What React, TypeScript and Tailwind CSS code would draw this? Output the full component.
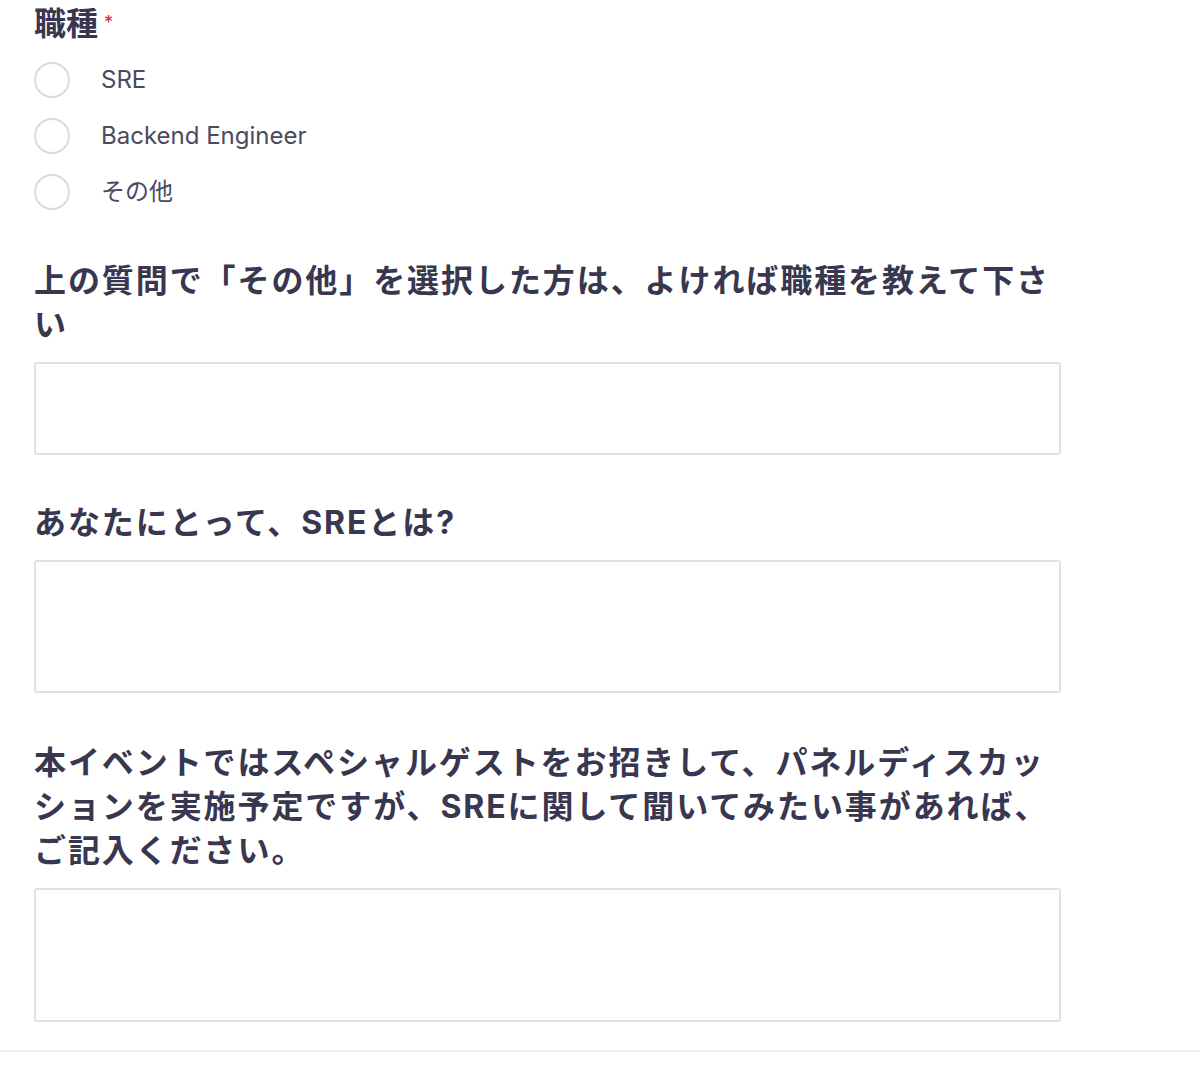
const font = { fontFamily: 'Inter, "Noto Sans CJK JP", sans-serif' };

const options = ['SRE', 'Backend Engineer', 'その他'];

const Radio = ({ label }: { label: string }) => (
  <label className="flex h-[56px] items-center">
    <span className="h-[36px] w-[36px] shrink-0 rounded-full border-2 border-[#dbdae3] bg-white" />
    <span className="ml-[31px] text-[24px] leading-none text-[#4b4a5f]">{label}</span>
  </label>
);

const Question = ({ children }: { children: React.ReactNode }) => (
  <h3 className="text-[32px] font-bold leading-[44px] tracking-[0.06em] text-[#39364f]">{children}</h3>
);

const TextBox = ({ height }: { height: string }) => (
  <div className={`mt-[15px] w-full rounded-[3px] border-2 border-[#e1e0e7] bg-white ${height}`} />
);

export default function App() {
  return (
    <div className="min-h-[1082px] bg-white" style={font}>
      <div className="w-[1061px] pl-[34px]">
        <div className="flex items-start pt-[4px]">
          <h2 className="text-[32px] font-bold leading-[40px] text-[#39364f]">職種</h2>
          <span className="ml-[6px] mt-[10px] text-[18px] leading-none text-[#d1273e]">*</span>
        </div>
        <div className="mt-[8px]">
          {options.map((o) => (
            <Radio key={o} label={o} />
          ))}
        </div>

        <div className="mt-[39px]">
          <Question>上の質問で「その他」を選択した方は、よければ職種を教えて下さい</Question>
          <TextBox height="h-[93px]" />
        </div>

        <div className="mt-[46px]">
          <Question>あなたにとって、SREとは?</Question>
          <TextBox height="h-[133px]" />
        </div>

        <div className="mt-[48px]">
          <Question>
            本イベントではスペシャルゲストをお招きして、パネルディスカッションを実施予定ですが、SREに関して聞いてみたい事があれば、ご記入ください。
          </Question>
          <TextBox height="h-[134px]" />
        </div>
      </div>
      <div className="mt-[28px] border-t-2 border-[#ebebf0]" />
    </div>
  );
}
